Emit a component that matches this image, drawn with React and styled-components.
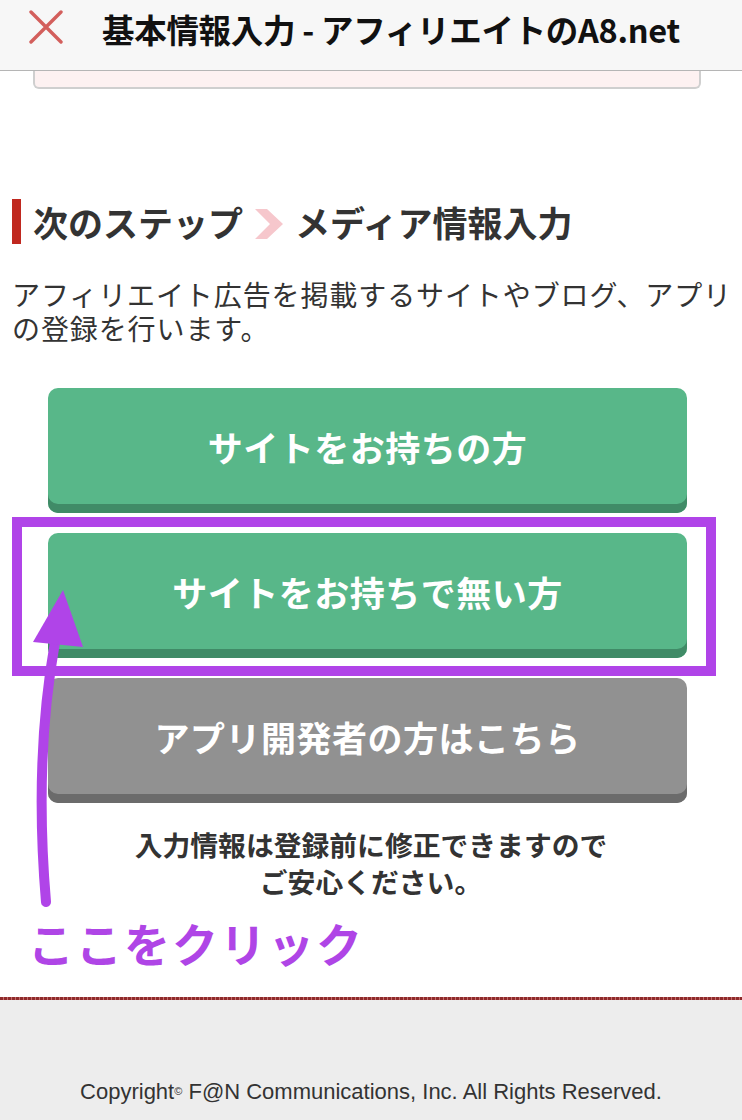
import React from "react";
import styled, { createGlobalStyle } from "styled-components";

const Global = createGlobalStyle`
  html, body { margin: 0; padding: 0; background: #fff; }
  body { font-family: "Noto Sans CJK JP", "Noto Sans", sans-serif; color: #333; }
`;

const Page = styled.div`
  position: relative;
  width: 742px;
  min-height: 1120px;
  display: flex;
  flex-direction: column;
  overflow: hidden;
`;

const Header = styled.header`
  height: 70px;
  background: #f7f7f7;
  border-bottom: 1px solid #b5b5b5;
  display: flex;
  align-items: center;
  gap: 38px;
  padding: 0 0 0 28px;
  box-sizing: content-box;
`;

const CloseIcon = styled.svg`
  width: 36px;
  height: 34px;
  flex: none;
  margin-top: -16px;
`;

const Title = styled.h1`
  margin: -14px 0 0;
  font-size: 32.5px;
  font-weight: 700;
  color: #111;
  letter-spacing: -0.3px;
  white-space: nowrap;
`;

const NoticeTail = styled.div`
  margin: 0 41px 0 33px;
  height: 16px;
  background: #fdf1f1;
  border: 2px solid #cfcfcf;
  border-top: none;
  border-radius: 0 0 6px 6px;
`;

const Main = styled.main`
  padding: 110px 0 0 12px;
  display: flex;
  flex-direction: column;
`;

const StepHeading = styled.h2`
  margin: 0;
  height: 45px;
  display: flex;
  align-items: center;
  border-left: 9px solid #c0281f;
  padding-left: 12px;
  font-size: 35px;
  font-weight: 700;
  color: #333;
  line-height: 1;
  gap: 12px;
`;

const Chevron = styled.svg`
  width: 28px;
  height: 30px;
  flex: none;
  margin-top: 4px;
`;

const Lead = styled.p`
  margin: 33px 0 0;
  font-size: 28px;
  line-height: 34px;
  letter-spacing: 0.9px;
  color: #333;
`;

const ButtonList = styled.div`
  margin: 43px 0 0 36px;
  width: 639px;
  display: flex;
  flex-direction: column;
  gap: 20px;
`;

const ActionButton = styled.button`
  display: flex;
  align-items: center;
  justify-content: center;
  height: 125px;
  padding: 0 0 9px;
  border: none;
  border-radius: 10px;
  background: ${(p) => (p.$tone === "gray" ? "#919191" : "#58b789")};
  box-shadow: inset 0 -9px 0 ${(p) => (p.$tone === "gray" ? "#6b6b6b" : "#408b67")};
  color: #fff;
  font-family: "Noto Sans CJK JP", sans-serif;
  font-size: 35px;
  font-weight: 700;
  letter-spacing: 0.5px;
  cursor: pointer;
`;

const Note = styled.p`
  margin: 23px 0 0 -12px;
  text-align: center;
  font-size: 27.8px;
  font-weight: 700;
  line-height: 37px;
  color: #333;
`;

const ClickLabel = styled.div`
  margin: 12px 0 0 16px;
  font-size: 46px;
  font-weight: 700;
  line-height: 60px;
  letter-spacing: 2px;
  color: #af45e6;
`;

const Footer = styled.footer`
  margin-top: 25px;
  flex: 1;
  background: #ededed;
  position: relative;
  display: flex;
  align-items: flex-end;
  justify-content: center;
  padding-bottom: 15px;
  &::before {
    content: "";
    position: absolute;
    left: 0;
    right: 0;
    top: 0;
    height: 3px;
    background: repeating-linear-gradient(
      90deg,
      #8e2a2a 0px,
      #8e2a2a 3px,
      #c46a6a 3px,
      #c46a6a 4px
    );
  }
`;

const Copyright = styled.small`
  font-family: "Liberation Sans", Arial, sans-serif;
  font-size: 22px;
  color: #333;
  sup {
    font-size: 11px;
    vertical-align: 4px;
  }
`;

const Highlight = styled.div`
  position: absolute;
  left: 12px;
  top: 517px;
  width: 684px;
  height: 139px;
  border: 10px solid #b044e8;
  pointer-events: none;
`;

const Arrow = styled.svg`
  position: absolute;
  left: 0;
  top: 560px;
  width: 120px;
  height: 360px;
  pointer-events: none;
`;

export default function App() {
  return (
    <Page>
      <Global />
      <Header>
        <CloseIcon viewBox="0 0 36 34">
          <path d="M3 2 L33 32 M33 2 L3 32" stroke="#d35f5c" strokeWidth="3.4" strokeLinecap="round" fill="none" />
        </CloseIcon>
        <Title>基本情報入力 - アフィリエイトのA8.net</Title>
      </Header>
      <NoticeTail />
      <Main>
        <StepHeading>
          次のステップ
          <Chevron viewBox="0 0 28 30">
            <polygon points="0,0 12,0 28,15 12,30 0,30 15,15" fill="#f6c7cc" />
          </Chevron>
          メディア情報入力
        </StepHeading>
        <Lead>
          アフィリエイト広告を掲載するサイトやブログ、アプリ
          <br />
          の登録を行います。
        </Lead>
        <ButtonList>
          <ActionButton>サイトをお持ちの方</ActionButton>
          <ActionButton>サイトをお持ちで無い方</ActionButton>
          <ActionButton $tone="gray">アプリ開発者の方はこちら</ActionButton>
        </ButtonList>
        <Note>
          入力情報は登録前に修正できますので
          <br />
          ご安心ください。
        </Note>
        <ClickLabel>ここをクリック</ClickLabel>
      </Main>
      <Footer>
        <Copyright>
          Copyright<sup>©</sup> F@N Communications, Inc. All Rights Reserved.
        </Copyright>
      </Footer>
      <Highlight />
      <Arrow viewBox="0 0 120 360">
        <path d="M46 342 Q34 200 55 82" stroke="#b044e8" strokeWidth="10" strokeLinecap="round" fill="none" />
        <polygon points="63,30 33,82 83,87" fill="#b044e8" />
      </Arrow>
    </Page>
  );
}
